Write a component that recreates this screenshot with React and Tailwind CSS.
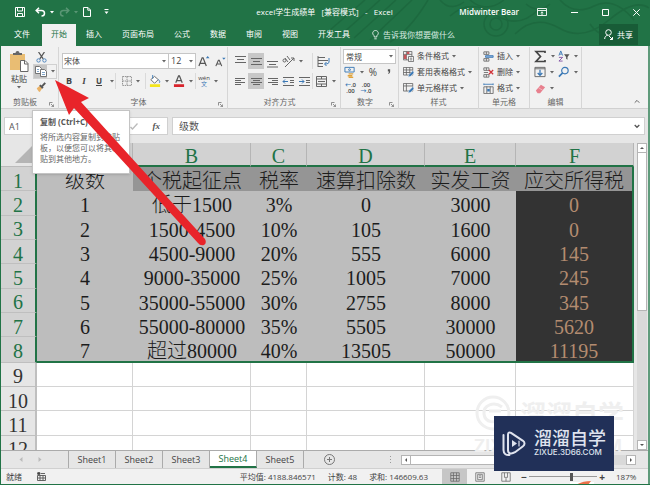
import React from "react";

const UI = "font-['Open_Sans','Noto_Sans_CJK_SC',sans-serif]";

function Caret({ className = "" }) {
  return (
    <svg className={`shrink-0 ${className}`} width="4" height="3" viewBox="0 0 4 3" aria-hidden="true">
      <path d="M0 0h4L2 2.5z" fill="#666" />
    </svg>
  );
}

function Icon({ size = 13, children, className = "" }) {
  return (
    <svg
      className={`shrink-0 ${className}`}
      width={size}
      height={size}
      viewBox="0 0 13 13"
      fill="none"
      stroke="#666"
      strokeWidth="1"
      aria-hidden="true"
    >
      {children}
    </svg>
  );
}

function Tool({ label, width = "w-4", active, caret, children }) {
  return (
    <button
      type="button"
      aria-label={label}
      className={`flex h-4 shrink-0 items-center justify-center gap-1 ${width} ${active ? "bg-[#c8c8c8]" : ""}`}
    >
      {children}
      {caret && <Caret />}
    </button>
  );
}

function Rule() {
  return <span className="h-4 w-px shrink-0 bg-[#dadada]" />;
}

function Group({ title, width, launcher, children }) {
  return (
    <section className={`flex h-[62px] shrink-0 flex-col border-r border-[#d6d6d6] ${width}`}>
      <div className="flex h-[49px] flex-col">{children}</div>
      <div className="flex h-3 items-center text-[#666]">
        <span className="flex-1 text-center">{title}</span>
        {launcher && (
          <button type="button" aria-label={`${title}设置`} className="mr-1 mt-1">
            <svg width="5" height="5" viewBox="0 0 5 5" fill="none" stroke="#777" strokeWidth="0.8">
              <path d="M.5 3.5v-3h3M2 2l2.5 2.5M4.6 2.4v2.2H2.4" />
            </svg>
          </button>
        )}
      </div>
    </section>
  );
}

function Lines({ rows, arrow }) {
  return (
    <Icon>
      {rows.map(([x1, x2, y]) => (
        <path key={y} d={`M${x1} ${y}H${x2}`} />
      ))}
      {arrow === "left" && <path d="M6 6.5H1M3 4.5l-2 2 2 2" stroke="#3a78b5" />}
      {arrow === "right" && <path d="M1 6.5h5M4 4.5l2 2-2 2" stroke="#3a78b5" />}
    </Icon>
  );
}

function TitleBar() {
  return (
    <header className="relative flex h-6 shrink-0 items-center text-white">
      <div className="flex flex-1 items-center pl-[15px]">
        <button type="button" aria-label="保存" className="w-5">
          <svg width="10" height="10" viewBox="0 0 10 10" fill="none" stroke="#fff">
            <path d="M.5.5h9v9h-9zM2.5.5v3.500h5V.5M2.5 9.500V6.500h5v3" />
          </svg>
        </button>
        <button type="button" aria-label="撤销" className="flex w-6 items-center gap-1">
          <svg width="11" height="10" viewBox="0 0 11 10" fill="none" stroke="#fff" strokeWidth="1.5">
            <path d="M4 .8L1.200 3.500 4 6.200M1.500 3.500H6.500c4 0 4 5.500 0 5.500" />
          </svg>
          <svg width="4" height="3" viewBox="0 0 4 3" fill="#fff"><path d="M0 0h4L2 2.500z" /></svg>
        </button>
        <button type="button" aria-label="恢复" className="flex w-6 items-center gap-1 opacity-25">
          <svg width="11" height="10" viewBox="0 0 11 10" fill="none" stroke="#fff" strokeWidth="1.5">
            <path d="M7 .8l2.800 2.700L7 6.200M9.500 3.500H4.500c-4 0-4 5.500 0 5.500" />
          </svg>
          <svg width="4" height="3" viewBox="0 0 4 3" fill="#fff"><path d="M0 0h4L2 2.500z" /></svg>
        </button>
        <button type="button" aria-label="新建" className="w-[21px]">
          <svg width="8" height="10" viewBox="0 0 8 10" fill="none" stroke="#fff">
            <path d="M.5.5h4.500L7.500 3v6.500h-7zM4.800.5v2.700h2.700" />
          </svg>
        </button>
        <button type="button" aria-label="自定义快速访问工具栏">
          <svg width="5" height="6" viewBox="0 0 5 6" fill="#fff"><path d="M.5 0h4v1h-4zM.5 2.500h4L2.500 5z" /></svg>
        </button>
      </div>
      <h1 className="mr-4 shrink-0 whitespace-pre pb-px">excel学生成绩单   [兼容模式]   -   Excel</h1>
      <div className="flex flex-1 items-center justify-end">
        <span className="mr-[18px] pb-px text-[8px] font-semibold">Midwinter Bear</span>
        <button type="button" aria-label="功能区显示选项" className="mr-6">
          <svg width="10" height="8" viewBox="0 0 10 8" fill="none" stroke="#fff">
            <path d="M.5.5h9v7h-9zM1 2.500h8M5 7V4M3.700 5L5 3.800 6.300 5" strokeWidth=".9" />
          </svg>
        </button>
        <button type="button" aria-label="最小化" className="mr-6">
          <svg width="7" height="7" viewBox="0 0 7 7" stroke="#fff"><path d="M0 3.500h7" /></svg>
        </button>
        <button type="button" aria-label="最大化" className="mr-6">
          <svg width="7" height="7" viewBox="0 0 7 7" fill="none" stroke="#fff"><path d="M.5.5h6v6h-6z" /></svg>
        </button>
        <button type="button" aria-label="关闭" className="mr-[10px]">
          <svg width="7" height="7" viewBox="0 0 7 7" stroke="#fff"><path d="M.3.3l6.400 6.400M6.700.3L.3 6.700" /></svg>
        </button>
      </div>
    </header>
  );
}

const menus = [
  ["文件", "w-10"],
  ["开始", "w-[34px]"],
  ["插入", "w-9"],
  ["页面布局", "w-[52px]"],
  ["公式", "w-9"],
  ["数据", "w-9"],
  ["审阅", "w-9"],
  ["视图", "w-9"],
  ["开发工具", "w-[52px]"],
];

function MenuBar() {
  return (
    <nav className="relative flex h-[22px] shrink-0 items-stretch pl-0.5 text-white">
      {menus.map(([name, width]) => (
        <button
          key={name}
          type="button"
          className={`shrink-0 pb-0.5 ${width} ${name === "开始" ? "bg-[#f1f1f1] text-[#217346]" : ""}`}
        >
          {name}
        </button>
      ))}
      <button type="button" className="ml-3 flex shrink-0 items-center gap-1 text-[#d9ebe0]">
        <svg width="7" height="10" viewBox="0 0 7 10" fill="none" stroke="#fff" strokeWidth=".8">
          <path d="M2.200 7V5.800C-.6 3.500 1 .5 3.500.5s4.100 3 1.300 5.300V7zM2.300 8.800h2.400" />
        </svg>
        告诉我你想要做什么
      </button>
      <button type="button" className="mb-px ml-auto mr-3 flex w-[39px] items-center justify-center gap-1 bg-[#185c37]">
        <svg width="9" height="11" viewBox="0 0 9 11" fill="none" stroke="#fff">
          <circle cx="4.500" cy="3.500" r="2.800" />
          <path d="M.7 10c0-2 1-3.400 3-3.700M5 7l3.500 3.500M8.500 8v2.500H6" />
        </svg>
        共享
      </button>
    </nav>
  );
}

function Clipboard() {
  return (
    <Group title="剪贴板" width="w-[58px]" launcher>
      <div className="flex pl-2 pt-1">
        <button type="button" className="flex w-5 flex-col items-center">
          <svg width="20" height="21" viewBox="0 0 20 21" aria-hidden="true">
            <path d="M1 3h15v16H1z" fill="#e9bd73" />
            <path d="M4 4V2h2.500a2 2 0 014 0H13v2z" fill="#666" />
            <path d="M11.500 9.500h4.500l3 3v8h-7.500z" fill="#fff" stroke="#666" />
            <path d="M15.500 9.500v3.500H19" fill="none" stroke="#666" />
          </svg>
          <span className="leading-[14px]">粘贴</span>
          <Caret />
        </button>
        <div className="ml-1 flex flex-col">
          <button type="button" aria-label="剪切" className="flex h-[13px] w-4 items-center justify-center">
            <Icon size={11}>
              <path d="M3 0l5.500 8M10 0L4.500 8" strokeWidth="1.500" stroke="#555" />
              <circle cx="3" cy="10" r="2" stroke="#3a78b5" />
              <circle cx="10" cy="10" r="2" stroke="#3a78b5" />
            </Icon>
          </button>
          <button type="button" aria-label="复制" className="flex h-[15px] w-6 items-center border border-[#d0d0d0]">
            <span className="flex h-[13px] w-[13px] items-center justify-center bg-[#c5c5c5]">
              <svg width="12" height="11" viewBox="0 0 12 11" fill="#fff" stroke="#666" strokeWidth=".9">
                <path d="M.5.5h4l2 2v5h-6z" />
                <path d="M5.500 3.500h4l2 2v5h-6z" />
                <path d="M7 6.500h3M7 8.500h3M2 3.500h2M2 5.500h2" stroke="#4a7eb0" strokeWidth=".7" />
              </svg>
            </span>
            <Caret className="ml-1" />
          </button>
          <button type="button" aria-label="格式刷" className="flex h-4 w-4 items-center justify-center">
            <Icon size={10}>
              <path d="M1 8l4-3 3 3-3 5c-2-1-3-3-4-5z" fill="#eab267" stroke="none" />
              <path d="M5 4l4 4M7.500 6L12 1" stroke="#555" strokeWidth="2.500" />
            </Icon>
          </button>
        </div>
      </div>
    </Group>
  );
}

function FontGroup() {
  return (
    <Group title="字体" width="w-[169px]" launcher>
      <div className="flex items-center pl-[3px] pt-[6px]">
        <label className="flex h-4 w-[107px] shrink-0 items-center border border-[#c6c6c6] bg-white pr-[2px]">
          <select aria-label="字体" className="min-w-0 flex-1 appearance-none bg-white pl-px outline-none">
            <option>宋体</option>
          </select>
          <Caret />
        </label>
        <label className="-ml-px flex h-4 w-[28px] shrink-0 items-center border border-[#c6c6c6] bg-white pr-[2px]">
          <select aria-label="字号" className="min-w-0 flex-1 appearance-none bg-white pl-[2px] text-[9px] outline-none">
            <option>12</option>
          </select>
          <Caret />
        </label>
        <Tool label="增大字号">
          <Icon size={12}>
            <path d="M1 12L4.500 3h1L9 12M2.500 9h5" strokeWidth="1.300" stroke="#555" />
            <path d="M8.500 3.500h4l-2-2.500z" fill="#3a78b5" stroke="none" />
          </Icon>
        </Tool>
        <Tool label="减小字号">
          <Icon size={11}>
            <path d="M1 12l3-7h1l3 7M2.500 9.500h4" strokeWidth="1.300" stroke="#555" />
            <path d="M8.500 2h4l-2 2.500z" fill="#3a78b5" stroke="none" />
          </Icon>
        </Tool>
      </div>
      <div className="flex items-center pl-[2px] pt-1">
        <Tool label="加粗"><b className="text-[9px]">B</b></Tool>
        <Tool label="倾斜" width="w-[14px]"><i className="font-['Liberation_Serif',serif] text-[9px] font-bold">I</i></Tool>
        <Tool label="下划线" width="w-6" caret><b className="pl-1 pr-1 text-[8px] underline">U</b></Tool>
        <Rule />
        <Tool label="边框" width="w-[29px]" caret>
          <Icon size={10}><path d="M.7.700h11.600v11.600H.7zM6.500.5v12M.5 6.500h12" stroke="#777" strokeDasharray="2 1" /></Icon>
        </Tool>
        <Rule />
        <Tool label="填充颜色" width="w-[25px]" caret>
          <Icon size={12}>
            <path d="M2 5l4-3.500L10 5 6 9z" fill="#fff" />
            <path d="M4 0v4M10 5c2 1 2 3 1 3.500" stroke="#3a78b5" />
            <path d="M1 11.500h11" stroke="#f4e51d" strokeWidth="3" />
          </Icon>
        </Tool>
        <Tool label="字体颜色" width="w-6" caret>
          <Icon size={12}>
            <path d="M3 8.500L6 1h1l3 7.500M4 6h5" strokeWidth="1.300" stroke="#555" />
            <path d="M1 11.500h11" stroke="#d8242c" strokeWidth="3" />
          </Icon>
        </Tool>
        <Rule />
        <Tool label="拼音" width="w-6" caret>
          <span className="flex flex-col items-center text-[6px] leading-[6px]"><span>wén</span><span className="text-[#3a78b5]">文</span></span>
        </Tool>
      </div>
    </Group>
  );
}

function AlignGroup() {
  return (
    <Group title="对齐方式" width="w-[113px]" launcher>
      <div className="flex items-center pl-1 pt-[6px]">
        <Tool label="顶端对齐"><Lines rows={[[1, 12, 1.5], [3, 10, 4.5], [1, 12, 7.5]]} /></Tool>
        <Tool label="垂直居中" active><Lines rows={[[1, 12, 3.5], [3, 10, 6.5], [1, 12, 9.5]]} /></Tool>
        <Tool label="底端对齐"><Lines rows={[[1, 12, 6.5], [3, 10, 9.5], [1, 12, 12]]} /></Tool>
        <Tool label="方向" width="w-6" caret>
          <Icon>
            <path d="M3 12l9-9M9 3h3v3" />
            <circle cx="2.500" cy="5.500" r="1.500" />
            <path d="M3 3l3 4M5 1l3 4" />
          </Icon>
        </Tool>
        <span className="w-2" />
        <Rule />
        <Tool label="自动换行" width="w-5">
          <Icon>
            <path d="M1 2.500h7M1 5.500h10M1 8.500h5M1 11.500h5M1 1v11" />
            <path d="M12 3v4c0 1-1 2-4 2M9.500 7l-2 2 2 2" stroke="#3a78b5" />
          </Icon>
        </Tool>
      </div>
      <div className="flex items-center pl-1 pt-1">
        <Tool label="左对齐"><Lines rows={[[1, 11, 3.5], [1, 7, 5.5], [1, 11, 7.5], [1, 7, 9.5]]} /></Tool>
        <Tool label="居中" active><Lines rows={[[1, 12, 3.5], [3, 10, 5.5], [1, 12, 7.5], [3, 10, 9.5]]} /></Tool>
        <Tool label="右对齐"><Lines rows={[[2, 12, 3.5], [6, 12, 5.5], [2, 12, 7.5], [6, 12, 9.5]]} /></Tool>
        <Tool label="减少缩进"><Lines arrow="left" rows={[[1, 12, 2.5], [8, 12, 5.5], [8, 12, 7.5], [1, 12, 10.5]]} /></Tool>
        <Tool label="增加缩进"><Lines arrow="right" rows={[[1, 12, 2.5], [8, 12, 5.5], [8, 12, 7.5], [1, 12, 10.5]]} /></Tool>
        <Rule />
        <Tool label="合并后居中" width="w-6" caret>
          <Icon>
            <path d="M1.500 1.500h10v10h-10zM1.500 4h10M1.500 9h10M6.500 1v3M6.500 9v3M3 6.500h7" />
          </Icon>
        </Tool>
      </div>
    </Group>
  );
}

function NumberGroup() {
  return (
    <Group title="数字" width="w-[58px]" launcher>
      <div className="flex flex-col pl-[2px] pt-[2px]">
        <label className="flex h-[15px] w-[53px] items-center border border-[#c6c6c6] bg-white pr-[2px]">
          <select aria-label="数字格式" className="min-w-0 flex-1 appearance-none bg-white pl-[2px] outline-none">
            <option>常规</option>
          </select>
          <Caret />
        </label>
        <div className="flex">
          <Tool label="会计格式" width="w-[22px]" caret>
            <Icon size={12}>
              <path d="M1 1.500h10v5H1z" stroke="#3a78b5" />
              <circle cx="6" cy="4" r="1" stroke="#3a78b5" />
              <path d="M5 8.500h5M4 10.500h5M5 12.500h5" stroke="#e0a33c" strokeWidth="1.500" />
            </Icon>
          </Tool>
          <Tool label="百分比"><span className="text-[10px]">%</span></Tool>
          <Tool label="千位分隔">
            <Icon size={10}><path d="M5 3h3v3c0 1.500-.7 2.500-2.500 3V7.800c.8-.3 1.200-.9 1.200-1.800H5z" fill="#555" stroke="none" /></Icon>
          </Tool>
        </div>
        <div className="flex text-[6px] font-semibold leading-[6px]">
          <Tool label="增加小数位" width="w-[15px]"><span><span className="text-[#3a78b5]">←</span>.0<br />.00</span></Tool>
          <Tool label="减少小数位"><span>.00<br /><span className="text-[#3a78b5]">→</span>.0</span></Tool>
        </div>
      </div>
    </Group>
  );
}

function Command({ label, icon }) {
  return (
    <button type="button" className="flex h-4 items-center gap-[3px] whitespace-nowrap">
      {icon}
      <span>{label}</span>
      <Caret />
    </button>
  );
}

function StylesGroup() {
  const brush = <path d="M12 4L7 9l-1 3 3-1 4-4z" fill="#3a78b5" stroke="#fff" strokeWidth=".6" />;
  return (
    <Group title="样式" width="w-20">
      <div className="flex flex-col pl-1 pt-px">
        <Command
          label="条件格式"
          icon={
            <Icon size={11}>
              <path d="M.5.5h10v10H.5zM.5 4h10M4 .5v10" />
              <path d="M4.500 1h3v2.500h-3zM1 4.500h3v5H1z" fill="#c8555a" stroke="none" />
              <path d="M6.500 6.500h6v6h-6z" fill="#fff" />
              <path d="M8 8.500h3M8 10.500h3" />
            </Icon>
          }
        />
        <Command
          label="套用表格格式"
          icon={<Icon size={11}><path d="M.5.5h11v9H.5zM.5 3.500h11M.5 6.500h11M4 .5v9M8 .5v9" />{brush}</Icon>}
        />
        <Command label="单元格样式" icon={<Icon size={11}><path d="M.5.5h11v9H.5zM.5 3.500h11M4 .5v9" />{brush}</Icon>} />
      </div>
    </Group>
  );
}

function CellsGroup() {
  return (
    <Group title="单元格" width="w-[51px]">
      <div className="flex flex-col pl-1 pt-px">
        <Command
          label="插入"
          icon={<Icon size={11}><path d="M1 1h6v3H1zM4 1v3M1 9h6v3H1zM4 9v3" /><path d="M3 5.500h9v2H3z" fill="#8fb4dc" stroke="#3a78b5" /></Icon>}
        />
        <Command
          label="删除"
          icon={<Icon size={11}><path d="M1 1h6v3H1zM4 1v3M1 9h6v3H1zM4 9v3M1 6.500h5" /><path d="M7 3.500l5 5M12 3.500l-5 5" stroke="#d2353b" strokeWidth="1.500" /></Icon>}
        />
        <Command
          label="格式"
          icon={<Icon size={11}><path d="M1 .5v2M12 .5v2M1 1.500h11" stroke="#3a78b5" /><path d="M1 4.500h11v8H1zM4.500 4v8M8.500 4v8" /><path d="M5 7h3v3H5z" fill="#3a78b5" stroke="none" /></Icon>}
        />
      </div>
    </Group>
  );
}

function EditGroup() {
  return (
    <Group title="编辑" width="w-[52px]">
      <div className="grid grid-cols-2 pl-1 pt-px">
        <Tool label="自动求和" width="w-5" caret>
          <Icon><path d="M11 3V1.500H2L6.500 6.500 2 11.500h9V10" strokeWidth="1.700" stroke="#444" /></Icon>
        </Tool>
        <Tool label="排序和筛选" width="w-5" caret>
          <Icon size={12}>
            <path d="M1 6l2-5 2 5M2 4.500h2" stroke="#3a78b5" />
            <path d="M1 8h4l-4 4h4" stroke="#8354a5" />
            <path d="M6.500 4.500h6l-2.200 3v3l-1.500-1v-2z" fill="#555" stroke="none" />
          </Icon>
        </Tool>
        <Tool label="填充" width="w-5" caret>
          <Icon size={12}><path d="M1 1.500h11v10H1zM1 3h11" /><path d="M6.500 4v6M4 7.500l2.500 2.500L9 7.500" stroke="#3a78b5" strokeWidth="1.400" /></Icon>
        </Tool>
        <Tool label="查找和选择" width="w-5" caret>
          <Icon size={12}><circle cx="7.500" cy="5" r="3.500" stroke="#3a78b5" strokeWidth="1.300" /><path d="M5 7.500L1 11.500" stroke="#3a78b5" strokeWidth="1.800" /></Icon>
        </Tool>
        <Tool label="清除" width="w-5" caret>
          <Icon size={11}><path d="M1 9l6-7 5 3-6 7H3z" fill="#e8808e" stroke="none" /><path d="M4 5.500l5 3" stroke="#f6cdd2" strokeWidth=".8" /></Icon>
        </Tool>
      </div>
    </Group>
  );
}

function Ribbon() {
  return (
    <div className="flex h-[63px] shrink-0 border-b border-[#d0d0d0] bg-[#f1f1f1] pt-px text-[#444]">
      <Clipboard />
      <FontGroup />
      <AlignGroup />
      <NumberGroup />
      <StylesGroup />
      <CellsGroup />
      <EditGroup />
      <button type="button" aria-label="折叠功能区" className="mb-1 ml-auto mr-2 self-end">
        <svg width="6" height="5" viewBox="0 0 6 5" fill="none" stroke="#666"><path d="M.7 3.700L3 1.400l2.300 2.300" /></svg>
      </button>
    </div>
  );
}

function FormulaBar() {
  return (
    <div className="flex h-[34px] shrink-0 items-center gap-1 bg-[#e6e6e6] px-[3px] text-[#555]">
      <input aria-label="名称框" defaultValue="A1" className="h-[18px] w-[88px] border border-[#d0d0d0] bg-white pl-1 text-[9px]" />
      <div className="flex h-[18px] w-[72px] items-center justify-end gap-[15px] border border-[#d0d0d0] bg-white pr-[7px]">
        <button type="button" aria-label="输入">
          <svg width="8" height="7" viewBox="0 0 8 7" fill="none" stroke="#bbb" strokeWidth="1.300"><path d="M.5 4l2 2L7.500.5" /></svg>
        </button>
        <button type="button" aria-label="插入函数" className="font-['Liberation_Serif',serif] text-[9px] font-bold italic">fx</button>
      </div>
      <div className="flex h-[18px] flex-1 items-center border border-[#d0d0d0] bg-white pr-1">
        <input aria-label="编辑栏" defaultValue="级数" className="min-w-0 flex-1 bg-white pl-[6px] text-[10px] outline-none" />
        <button type="button" aria-label="展开编辑栏">
          <svg width="6" height="5" viewBox="0 0 6 5" fill="none" stroke="#555" strokeWidth="1.300"><path d="M.7 1L3 3.300 5.300 1" /></svg>
        </button>
      </div>
    </div>
  );
}

const letters = ["A", "B", "C", "D", "E", "F"];
const rows = [
  ["级数", "个税起征点", "税率", "速算扣除数", "实发工资", "应交所得税"],
  ["1", "低于1500", "3%", "0", "3000", "0"],
  ["2", "1500-4500", "10%", "105", "1600", "0"],
  ["3", "4500-9000", "20%", "555", "6000", "145"],
  ["4", "9000-35000", "25%", "1005", "7000", "245"],
  ["5", "35000-55000", "30%", "2755", "8000", "345"],
  ["6", "55000-80000", "35%", "5505", "30000", "5620"],
  ["7", "超过80000", "40%", "13505", "50000", "11195"],
  ["", "", "", "", "", ""],
  ["", "", "", "", "", ""],
  ["", "", "", "", "", ""],
  ["", "", "", "", "", ""],
];

function cellStyle(r, c) {
  const edge = c === 5 ? "border-r-2" : "";
  if (r > 7) return "border-b border-r border-[#d4d4d4] bg-white";
  const bottom = r === 7 ? "border-b-2" : "";
  let fill = "bg-[#bdbdbd] text-[#1c1c1c]";
  if (r === 0 && c > 0) fill = "bg-[#959595] text-[#1c1c1c]";
  if (r > 0 && c === 5) fill = "bg-[#333] text-[#b38c70]";
  return `border-[#217346] ${edge} ${bottom} ${fill}`;
}

function Sheet() {
  return (
    <table className="h-[317px] w-[633px] shrink-0 table-fixed border-separate border-spacing-0 text-center font-['Liberation_Serif','Noto_Sans_CJK_SC',serif] text-[20px] font-light leading-[18px]">
      <colgroup>
        <col className="w-9" />
        <col className="w-24" />
        <col className="w-[118px]" />
        <col className="w-14" />
        <col className="w-[118px]" />
        <col className="w-[91px]" />
        <col className="w-[118px]" />
      </colgroup>
      <thead>
        <tr className="h-6">
          <td className="border-b border-r border-[#bbb] bg-[#e6e6e6] p-0">
            <svg className="ml-auto mr-1" width="17" height="17" viewBox="0 0 17 17"><path d="M17 0v17H0z" fill="#b5b5b5" /></svg>
          </td>
          {letters.map((l) => (
            <th key={l} scope="col" className="border-b-2 border-r border-b-[#217346] border-r-[#b5b5b5] bg-[#d2d2d2] p-0 pt-1 font-normal text-[#217346]">
              {l}
            </th>
          ))}
        </tr>
      </thead>
      <tbody>
        {rows.map((cells, r) => (
          <tr key={r}>
            <th
              scope="row"
              className={`border-b border-r-2 border-b-[#bfbfbf] p-0 pt-1 font-normal ${
                r < 8 ? "border-r-[#217346] bg-[#d2d2d2] text-[#217346]" : "border-r-[#bfbfbf] bg-[#e6e6e6] text-[#333]"
              }`}
            >
              {r + 1}
            </th>
            {cells.map((v, c) => (
              <td key={c} className={`whitespace-nowrap p-0 pt-1 ${cellStyle(r, c)}`}>
                {v}
              </td>
            ))}
          </tr>
        ))}
      </tbody>
    </table>
  );
}

function ScrollButton({ label, d }) {
  return (
    <button type="button" aria-label={label} className="flex h-[10px] w-[10px] shrink-0 items-center justify-center border border-[#b5b5b5] bg-white">
      <svg width="4" height="4" viewBox="0 0 4 4" fill="#555"><path d={d} /></svg>
    </button>
  );
}

function SheetTabs() {
  return (
    <div className="flex h-[18px] shrink-0 items-stretch border-t border-[#ababab] bg-[#e6e6e6] text-[9px] text-[#444]">
      <div className="flex w-[67px] shrink-0 items-center gap-[15px] pl-[18px]">
        <button type="button" aria-label="上一个工作表"><svg width="4" height="5" viewBox="0 0 4 5" fill="#bbb"><path d="M3.500 0v5L.5 2.500z" /></svg></button>
        <button type="button" aria-label="下一个工作表"><svg width="4" height="5" viewBox="0 0 4 5" fill="#bbb"><path d="M.5 0v5l3-2.500z" /></svg></button>
      </div>
      <div className="flex shrink-0 border-l border-[#ababab]">
        {["Sheet1", "Sheet2", "Sheet3", "Sheet4", "Sheet5"].map((s) => (
          <button
            key={s}
            type="button"
            className={`w-[47px] border-r border-[#ababab] ${s === "Sheet4" ? "border-b-2 border-b-[#217346] bg-white text-[#217346]" : ""}`}
          >
            {s}
          </button>
        ))}
      </div>
      <button type="button" aria-label="新工作表" className="ml-5">
        <svg width="11" height="11" viewBox="0 0 11 11" fill="none" stroke="#777"><circle cx="5.500" cy="5.500" r="5" /><path d="M5.500 3v5M3 5.500h5" /></svg>
      </button>
      <div className="ml-auto flex w-[258px] items-center">
        <svg width="2" height="8" viewBox="0 0 2 8" fill="#999"><path d="M0 0h1v1H0zM0 3h1v1H0zM0 6h1v1H0z" /></svg>
        <span className="w-[9px]" />
        <ScrollButton label="向左滚动" d="M3 0v4L1 2z" />
        <span className="h-[10px] w-[190px] border-y border-r border-[#b5b5b5] bg-white" />
        <span className="h-[10px] flex-1 bg-[#d9d9d9]" />
        <ScrollButton label="向右滚动" d="M1 0v4l2-2z" />
        <span className="w-3" />
      </div>
    </div>
  );
}

function StatusBar() {
  return (
    <footer className="flex h-4 shrink-0 items-center border-t border-[#d0d0d0] bg-[#f1f1f1] text-[#444]">
      <span className="ml-[5px]">就绪</span>
      <svg className="ml-[15px]" width="9" height="9" viewBox="0 0 9 9" fill="none" stroke="#555" strokeWidth=".9">
        <path d="M.5 3.500h8v5h-8zM.5 6h8M3 3.500v5M6 3.500v5" />
        <circle cx="1.800" cy="1.500" r="1.300" fill="#444" />
        <path d="M4 1.500h4" />
      </svg>
      <div className="ml-auto flex gap-3">
        <span>平均值: 4188.846571</span>
        <span>计数: 48</span>
        <span>求和: 146609.63</span>
      </div>
      <button type="button" aria-label="普通" className="ml-[14px] flex h-full w-[25px] items-center justify-center bg-[#c6c6c6]">
        <Icon size={10}><path d="M1 1h11v11H1zM1 4.500h11M1 8.500h11M4.500 1v11M8.500 1v11" /></Icon>
      </button>
      <button type="button" aria-label="页面布局视图" className="flex h-full w-[26px] items-center justify-center">
        <Icon size={10}><path d="M1 1h11v11H1zM3.500 3h6v7h-6zM5 5h3M5 7h3" /></Icon>
      </button>
      <button type="button" aria-label="分页预览" className="flex h-full w-[26px] items-center justify-center">
        <Icon size={10}><path d="M1 1h11v11H1zM4.500 1v6h4V1M6.500 8v4" /></Icon>
      </button>
      <button type="button" aria-label="缩小" className="w-[10px] text-[10px] font-bold leading-3">−</button>
      <input
        type="range"
        aria-label="缩放"
        min="10"
        max="400"
        defaultValue="255"
        className="h-3 w-[68px] appearance-none bg-[linear-gradient(#999,#999)] bg-[length:100%_1px] bg-center bg-no-repeat [&::-webkit-slider-thumb]:h-2 [&::-webkit-slider-thumb]:w-[3px] [&::-webkit-slider-thumb]:appearance-none [&::-webkit-slider-thumb]:bg-[#555]"
      />
      <button type="button" aria-label="放大" className="w-[10px] text-[10px] font-bold leading-3">+</button>
      <span className="ml-[9px] mr-3 w-5">187%</span>
    </footer>
  );
}

function CopyTip() {
  return (
    <div role="tooltip" className="absolute left-8 top-[110px] w-[98px] border border-[#c4c4c4] bg-white pb-[9px] pl-[7px] pt-[5px] text-[#666] shadow-sm">
      <p className="mb-1 font-bold leading-[11px] text-[#555]">复制 (Ctrl+C)</p>
      <p className="w-[82px] leading-[11px]">将所选内容复制到剪贴板，以便您可以将其粘贴到其他地方。</p>
    </div>
  );
}

function Brand() {
  return (
    <div className="absolute bottom-[13px] right-9 flex h-[55px] w-[120px] items-center bg-[#213058] pl-2 text-[#dfe3ee]">
      <svg width="24" height="26" viewBox="0 0 24 26" fill="none" stroke="#dfe3ee" strokeWidth="2" strokeLinejoin="round" strokeLinecap="round">
        <path d="M6 3.500c0-2 1.500-2.500 3-1.700l12 8c2 1.400 2 4 0 5.400l-8 6c-3 2-7 2-7-2z" />
        <path d="M1.500 4v15c0 4 3 5.500 6 5" />
        <path d="M10 9l5 3.500-5 3.500z" fill="#dfe3ee" stroke="none" />
        <path d="M17 10v5" strokeWidth="1.200" />
      </svg>
      <div className="ml-2 flex flex-col pb-1">
        <span className="font-['Noto_Sans_CJK_SC',sans-serif] text-[18px] font-medium leading-5">溜溜自学</span>
        <span className="font-['Inter',sans-serif] text-[8px] font-medium leading-[10px]">ZIXUE.3D66.COM</span>
      </div>
    </div>
  );
}

function Watermark() {
  return (
    <div className="absolute bottom-6 right-[22px] flex w-[154px] flex-col text-[#efefef]" aria-hidden="true">
      <div className="flex items-center gap-2 font-['Noto_Sans_CJK_SC',sans-serif] text-[26px] font-bold leading-9">
        <svg className="shrink-0" width="38" height="38" viewBox="0 0 38 38" fill="none" stroke="#efefef" strokeWidth="3">
          <circle cx="19" cy="19" r="16" />
          <path d="M28 13c-8-6-19-2-18 7s12 10 17 4M15 17h12" />
        </svg>
        <span className="whitespace-nowrap">溜溜自学</span>
      </div>
      <span className="whitespace-nowrap font-['Inter',sans-serif] text-[17px] font-bold leading-7">ZIXUE.3D66.COM</span>
    </div>
  );
}

export default function App() {
  return (
    <main className={`relative flex h-screen w-full flex-col overflow-hidden border-b border-[#217346] bg-[#217346] text-[8px] leading-3 ${UI}`}>
      <svg className="absolute right-0 top-0" width="330" height="46" viewBox="0 0 330 46" fill="none" stroke="#1d693f" strokeWidth="1.500" aria-hidden="true">
        <path d="M10 30L45 0M22 34L60 0M34 38L76 0M50 40L92 0M70 42Q90 30 108 0M120 0q10 12 24 2M130 16q20-18 44-2t44-4M150 0q16 14 34 0M240 0q14 16 34 6t40 14" />
        <circle cx="176" cy="24" r="12" />
        <circle cx="176" cy="24" r="6" />
        <path d="M195 34q20-20 44-6t50-8 40-12M206 4q12 10 24 0M270 24q10 16 30 8" />
      </svg>
      <TitleBar />
      <MenuBar />
      <div className="flex min-h-0 flex-1 flex-col border-l border-r-2 border-l-[#217346] border-r-[#5f9b7b]">
        <Ribbon />
        <FormulaBar />
        <div className="flex min-h-0 flex-1 items-start overflow-hidden bg-[#e6e6e6]">
          <Sheet />
          <div className="ml-auto mr-px flex h-full w-[10px] flex-col bg-[#d9d9d9]">
            <ScrollButton label="向上滚动" d="M0 3h4L2 1z" />
            <span className="h-[158px] border-x border-b border-[#b5b5b5] bg-white" />
            <span className="flex-1" />
            <ScrollButton label="向下滚动" d="M0 1h4L2 3z" />
          </div>
        </div>
        <SheetTabs />
        <StatusBar />
      </div>
      <CopyTip />
      <Watermark />
      <Brand />
      <svg className="pointer-events-none absolute bottom-0 right-14 translate-y-px" width="24" height="4" viewBox="0 0 24 4" aria-hidden="true">
        <path d="M0 4V1h24v3z" fill="#fff" />
        <path d="M6 4Q12 0 21 0L18 4z" fill="#ec7049" />
      </svg>
      <svg className="pointer-events-none absolute left-0 top-0" width="220" height="260" viewBox="0 0 220 260" aria-hidden="true">
        <path d="M55 80L89 98 81 102 205 239Q207 243 204 245 200 246 198 243L74 108 69 115z" fill="#e8242a" />
      </svg>
    </main>
  );
}
